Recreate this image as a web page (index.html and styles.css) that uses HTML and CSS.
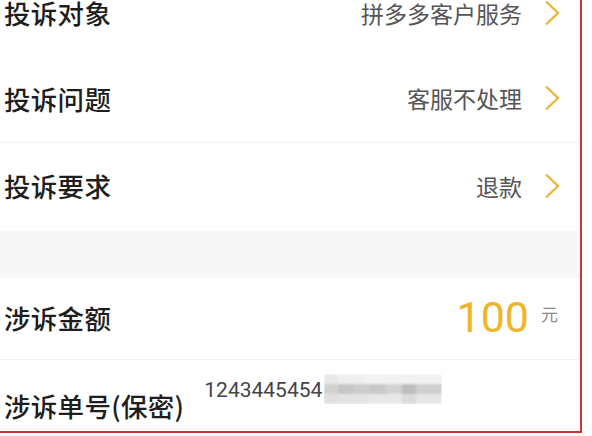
FILE: index.html
```html
<!DOCTYPE html>
<html lang="zh-CN">
<head>
<meta charset="utf-8">
<link rel="stylesheet" href="styles.css">
</head>
<body>
<div class="frame">
  <div class="list">
    <div class="row h86">
      <span class="label">投诉对象</span>
      <span class="value">拼多多客户服务</span>
      <svg class="chev" width="16" height="26" viewBox="0 0 16 26"><polyline points="2,1.5 14,13 2,24.5" fill="none" stroke="#e8b73a" stroke-width="2.4"/></svg>
    </div>
    <div class="row h86 sep">
      <span class="label">投诉问题</span>
      <span class="value">客服不处理</span>
      <svg class="chev" width="16" height="26" viewBox="0 0 16 26"><polyline points="2,1.5 14,13 2,24.5" fill="none" stroke="#e8b73a" stroke-width="2.4"/></svg>
    </div>
    <div class="row h88">
      <span class="label">投诉要求</span>
      <span class="value">退款</span>
      <svg class="chev" width="16" height="26" viewBox="0 0 16 26"><polyline points="2,1.5 14,13 2,24.5" fill="none" stroke="#e8b73a" stroke-width="2.4"/></svg>
    </div>
    <div class="gap"></div>
    <div class="row h82 sep amount-row">
      <span class="label">涉诉金额</span>
      <span class="amount">100</span>
      <span class="unit">元</span>
    </div>
    <div class="row last">
      <span class="label">涉诉单号(保密)</span>
      <span class="order">
        <span class="num">1243445454</span>
        <svg class="mosaic" width="118" height="30" viewBox="0 0 118 30">
          <defs><filter id="b"><feGaussianBlur stdDeviation="1"/></filter></defs>
          <g filter="url(#b)">
            <rect x="0" y="0" width="118" height="30" fill="#f2f2f2"/>
            <rect x="0" y="0" width="14" height="10" fill="#e8e8e8"/>
            <rect x="14" y="0" width="28" height="10" fill="#efefef"/>
            <rect x="0" y="10" width="14" height="10" fill="#d2d2d2"/>
            <rect x="14" y="10" width="16" height="10" fill="#c6c6c6"/>
            <rect x="30" y="10" width="16" height="10" fill="#cccccc"/>
            <rect x="46" y="10" width="16" height="10" fill="#c8c8c8"/>
            <rect x="62" y="10" width="16" height="10" fill="#d3d3d3"/>
            <rect x="78" y="10" width="14" height="10" fill="#bdbdbd"/>
            <rect x="92" y="10" width="26" height="10" fill="#cfcfcf"/>
            <rect x="0" y="20" width="14" height="10" fill="#e0e0e0"/>
            <rect x="14" y="20" width="30" height="10" fill="#e4e4e4"/>
            <rect x="44" y="20" width="34" height="10" fill="#e8e8e8"/>
            <rect x="78" y="20" width="14" height="10" fill="#dcdcdc"/>
            <rect x="92" y="20" width="26" height="10" fill="#e6e6e6"/>
          </g>
        </svg>
      </span>
    </div>
  </div>
</div>
</body>
</html>
```
FILE: styles.css
```css
* { box-sizing: border-box; }
html, body { margin: 0; padding: 0; background: #ffffff; }
body { width: 592px; height: 436px; overflow: hidden; }

.frame {
  width: 582px;
  height: 433px;
  border-right: 2px solid #c9373a;
  border-bottom: 2px solid #c9373a;
  overflow: hidden;
  background: #ffffff;
}

.list {
  margin-top: -29px;
  display: flex;
  flex-direction: column;
}

.row {
  display: flex;
  align-items: center;
  padding: 0 20px 3px 4px;
}
.sep { border-bottom: 1px solid #f1f1f1; }
.h86 { height: 86px; }
.h88 { height: 88px; }
.h82 { height: 82px; }

.label {
  font-family: "Noto Sans CJK SC", sans-serif;
  font-weight: 500;
  font-size: 26.5px;
  color: #1e1e1e;
  letter-spacing: 0.3px;
}

.value {
  margin-left: auto;
  font-family: "Noto Sans CJK SC", sans-serif;
  font-size: 23px;
  color: #555555;
}

.chev { margin-left: 22px; flex: none; }

.gap {
  height: 47px;
  background: #f7f7f7;
}

.amount-row { padding-right: 22px; padding-bottom: 2px; }
.amount {
  margin-left: auto;
  font-family: Roboto, sans-serif;
  font-size: 43px;
  color: #f0b429;
  line-height: 1;
}
.unit {
  margin-left: 12px;
  font-family: "Noto Sans CJK SC", sans-serif;
  font-size: 17px;
  color: #8a8a8a;
  margin-top: -8px;
}

.last {
  height: 90px;
  align-items: center;
  padding-bottom: 0;
}
.order {
  align-self: flex-start;
  margin-top: 14px;
  margin-left: 20px;
  display: flex;
  align-items: flex-start;
}
.num {
  font-family: Roboto, sans-serif;
  font-size: 21px;
  color: #444444;
  line-height: 24px;
  margin-top: 4px;
}
.mosaic { margin-left: 2px; }
```
